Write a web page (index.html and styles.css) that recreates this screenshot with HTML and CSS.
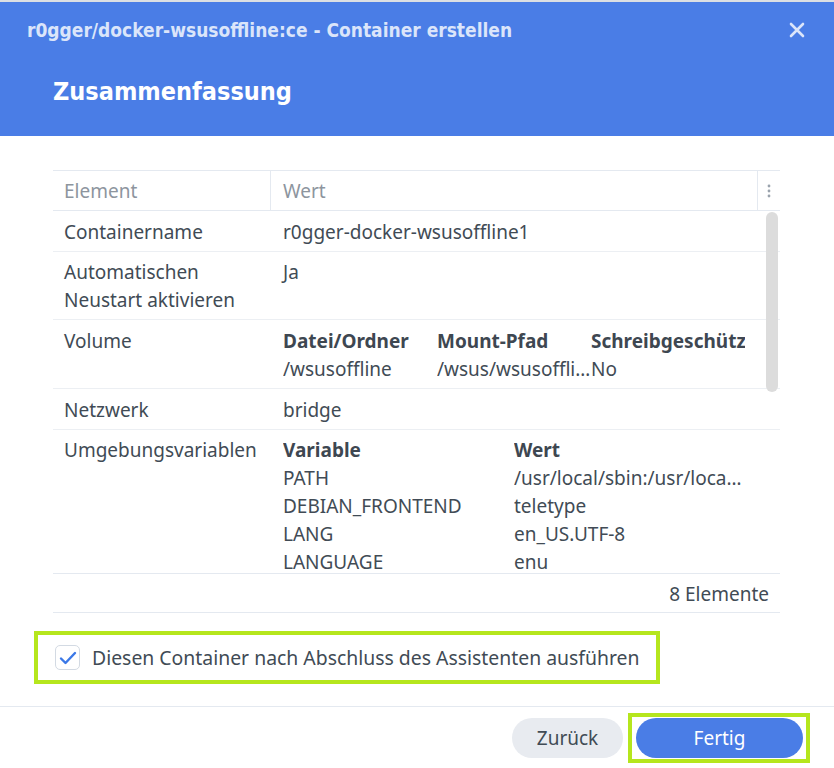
FILE: index.html
```html
<!DOCTYPE html>
<html lang="de">
<head>
<meta charset="utf-8">
<title>Container erstellen</title>
<link rel="stylesheet" href="styles.css">
</head>
<body>
<div class="dialog">
  <div class="header">
    <div class="titlebar">
      <span class="title">r0gger/docker-wsusoffline:ce - Container erstellen</span>
      <span class="close">
        <svg width="16" height="16" viewBox="0 0 16 16"><path d="M2 2 L14 14 M14 2 L2 14" stroke="currentColor" stroke-width="2.6" stroke-linecap="round"/></svg>
      </span>
    </div>
    <h1 class="heading">Zusammenfassung</h1>
  </div>

  <div class="content">
    <div class="grid">
      <div class="grid-head">
        <div class="hcell c1">Element</div>
        <div class="hcell c2">Wert</div>
        <div class="hcell c3">
          <svg width="4" height="16" viewBox="0 0 4 16"><circle cx="2" cy="3" r="1.4" fill="#9aa3ad"/><circle cx="2" cy="8" r="1.4" fill="#9aa3ad"/><circle cx="2" cy="13" r="1.4" fill="#9aa3ad"/></svg>
        </div>
      </div>
      <div class="grid-body">
        <div class="row">
          <div class="cell c1">Containername</div>
          <div class="cell c2">r0gger-docker-wsusoffline1</div>
        </div>
        <div class="row">
          <div class="cell c1">Automatischen<br>Neustart aktivieren</div>
          <div class="cell c2">Ja</div>
        </div>
        <div class="row">
          <div class="cell c1">Volume</div>
          <div class="cell c2">
            <div class="sub vol">
              <span class="b">Datei/Ordner</span><span class="b">Mount-Pfad</span><span class="b clip">Schreibgeschützt</span>
              <span>/wsusoffline</span><span>/wsus/wsusoffline</span><span>No</span>
            </div>
          </div>
        </div>
        <div class="row">
          <div class="cell c1">Netzwerk</div>
          <div class="cell c2">bridge</div>
        </div>
        <div class="row">
          <div class="cell c1">Umgebungsvariablen</div>
          <div class="cell c2">
            <div class="sub env">
              <span class="b">Variable</span><span class="b">Wert</span>
              <span>PATH</span><span>/usr/local/sbin:/usr/local/bin:/usr/sbin</span>
              <span>DEBIAN_FRONTEND</span><span>teletype</span>
              <span>LANG</span><span>en_US.UTF-8</span>
              <span>LANGUAGE</span><span>enu</span>
              <span>LC_ALL</span><span>en_US.UTF-8</span>
            </div>
          </div>
        </div>
        <div class="scrollbar"></div>
      </div>
      <div class="grid-foot">8 Elemente</div>
    </div>

    <label class="runbox">
      <span class="checkbox">
        <svg width="18" height="14" viewBox="0 0 18 14"><path d="M2 7.5 L6.5 12 L16 2" fill="none" stroke="#3b78e7" stroke-width="2.4" stroke-linecap="round" stroke-linejoin="round"/></svg>
      </span>
      <span class="runlabel">Diesen Container nach Abschluss des Assistenten ausführen</span>
    </label>
  </div>

  <div class="footer">
    <button class="btn btn-back">Zurück</button>
    <span class="highlight"><button class="btn btn-done">Fertig</button></span>
  </div>
</div>
</body>
</html>
```
FILE: styles.css
```css
* { box-sizing: border-box; }
html, body { margin: 0; padding: 0; }
body {
  width: 834px;
  height: 768px;
  overflow: hidden;
  background: #ffffff;
  font-family: "Noto Sans", "Open Sans", sans-serif;
  color: #414b55;
  border-top: 2px solid #dcdfe3;
}
.dialog {
  width: 834px;
  height: 766px;
  display: flex;
  flex-direction: column;
}
.header {
  background: #4a7de6;
  height: 134px;
  padding: 0 27px 0 27px;
  display: flex;
  flex-direction: column;
}
.titlebar {
  height: 56px;
  display: flex;
  align-items: center;
  justify-content: space-between;
}
.title {
  font-family: "DejaVu Sans Condensed", "DejaVu Sans", sans-serif;
  font-stretch: condensed;
  font-weight: bold;
  font-size: 19px;
  color: #dbe5fa;
}
.close {
  color: #dbe5fa;
  display: flex;
  margin-right: 2px;
}
.heading {
  margin: 6px 0 0 26px;
  font-family: "DejaVu Sans Condensed", "DejaVu Sans", sans-serif;
  font-stretch: condensed;
  font-weight: bold;
  font-size: 25px;
  color: #ffffff;
  line-height: 56px;
}
.content {
  flex: 1;
  padding: 34px 54px 0 34px;
  display: flex;
  flex-direction: column;
}
.grid {
  margin-left: 19px;
  width: 727px;
  font-size: 19px;
  line-height: 28px;
}
.grid-head {
  display: flex;
  height: 41px;
  border-top: 1px solid #e4e9f0;
  border-bottom: 1px solid #e4e9f0;
  color: #8d959e;
}
.hcell {
  display: flex;
  align-items: center;
  padding-left: 11px;
}
.hcell.c1 { width: 218px; border-right: 1px solid #e4e9f0; }
.hcell.c2 { width: 487px; padding-left: 12px; border-right: 1px solid #e4e9f0; }
.hcell.c3 { flex: 1; padding-left: 9px; }
.grid-body {
  position: relative;
  height: 362px;
  overflow: hidden;
}
.row {
  display: flex;
  border-bottom: 1px solid #eceff3;
  padding: 7px 0 5px 0;
}
.row:nth-child(2) { padding-top: 6px; }
.row:nth-child(5) { padding-top: 6px; }
.cell.c1 { width: 219px; padding-left: 11px; }
.cell.c2 { flex: 1; padding-left: 11px; padding-right: 34px; white-space: nowrap; overflow: hidden; }
.sub { display: grid; }
.sub span { white-space: nowrap; overflow: hidden; text-overflow: ellipsis; }
.sub span.clip { text-overflow: clip; }
.sub .b { font-weight: bold; color: #3e4751; }
.vol { grid-template-columns: 154px 154px 154px; }
.env { grid-template-columns: 231px 231px; }
.scrollbar {
  position: absolute;
  right: 2px;
  top: 1px;
  width: 12px;
  height: 180px;
  border-radius: 6px;
  background: #dcdcdc;
}
.grid-foot {
  height: 40px;
  border-top: 1px solid #e4e9f0;
  border-bottom: 1px solid #e4e9f0;
  display: flex;
  align-items: center;
  justify-content: flex-end;
  padding-right: 11px;
  padding-top: 2px;
}
.runbox {
  margin-top: 18px;
  width: 626px;
  height: 53px;
  border: 4px solid #b5e61d;
  display: flex;
  align-items: center;
  padding-left: 17px;
  gap: 12px;
}
.checkbox {
  width: 25px;
  height: 25px;
  border: 1px solid #d3dae3;
  border-radius: 5px;
  display: flex;
  align-items: center;
  justify-content: center;
  background: #fff;
}
.runlabel {
  font-size: 19.4px;
  color: #414b55;
}
.footer {
  height: 62px;
  border-top: 1px solid #e4e9f0;
  display: flex;
  align-items: center;
  justify-content: flex-end;
  padding-right: 24px;
  gap: 5px;
}
.btn {
  border: none;
  height: 40px;
  border-radius: 20px;
  font-family: "Noto Sans", "Open Sans", sans-serif;
  font-size: 19px;
}
.btn-back {
  width: 111px;
  background: #e8ebf0;
  color: #414b55;
}
.highlight {
  border: 4px solid #b5e61d;
  padding: 1px 3px 1px 4px;
  display: flex;
}
.btn-done {
  width: 167px;
  background: #4a7de6;
  color: #ffffff;
}
```
